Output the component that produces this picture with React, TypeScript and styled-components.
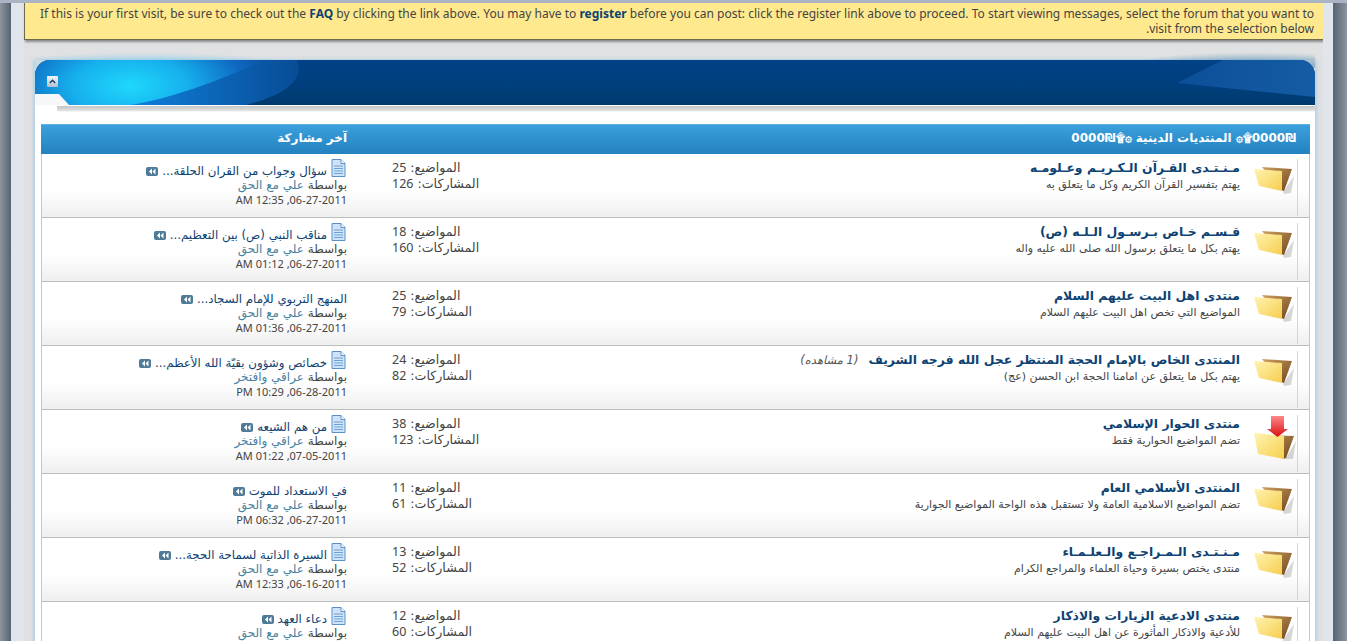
import React from "react";
import styled, { createGlobalStyle } from "styled-components";

const Global = createGlobalStyle`
  html, body { margin: 0; padding: 0; height: 100%; overflow: hidden; background: #e0e1e2; }
  body { font-family: "Noto Sans", "DejaVu Sans", sans-serif; font-size: 12px; color: #333; }
`;

const Page = styled.div`
  display: flex; height: 641px; overflow: hidden; border-top: 3px solid #aab4c4; box-sizing: border-box;
`;
const Gutter = styled.div<{ $side: "left" | "right" }>`
  flex: none; display: flex; flex-direction: ${(p) => (p.$side === "left" ? "row" : "row-reverse")};
  width: 24px;
`;
const GutterEdge = styled.div<{ $side: "left" | "right" }>`
  flex: none; width: ${(p) => (p.$side === "left" ? 11 : 14)}px;
  background: linear-gradient(${(p) => (p.$side === "left" ? "to right" : "to left")}, #8d959e, #556372);
`;
const GutterFill = styled.div<{ $side: "left" | "right" }>`
  flex: 1; background: linear-gradient(${(p) => (p.$side === "left" ? "to right" : "to left")}, #dfe6ef, #e2e5ea);
`;
const Main = styled.main`
  flex: 1; min-width: 0; background: #e0e1e2;
`;
const Notice = styled.div`
  direction: rtl; box-sizing: border-box; height: 37px; padding: 3px 9px 0 13px;
  background: #ffe98f; border: 1px solid #6f6a4c; border-width: 0 0 1px 1px; border-right: 0;
  box-shadow: 1px 2px 2px rgba(70, 70, 70, .55);
  font-size: 12px; line-height: 15px; color: #444; word-spacing: .05px;
`;
const NoticeLink = styled.a`
  color: #0d4272; font-weight: 700;
`;
const Block = styled.section`
  position: relative; margin: 20px 8px 0 11px;
  box-shadow: -2px 0 3px rgba(120, 190, 230, .4), 2px 0 3px rgba(120, 190, 230, .4);
`;
const BlockGlow = styled.div<{ $side: "left" | "right" }>`
  position: absolute; top: -8px; height: 16px; width: ${(p) => (p.$side === "left" ? 270 : 200)}px;
  ${(p) => (p.$side === "left" ? "left: 0;" : "right: 0;")}
  background: ${(p) =>
    p.$side === "left"
      ? "radial-gradient(ellipse at 40% 100%, rgba(110,200,240,.85), rgba(210,225,235,0) 70%)"
      : "radial-gradient(ellipse at 70% 100%, rgba(70,130,170,.9), rgba(210,225,235,0) 70%)"};
`;
const BlockHead = styled.header`
  position: relative; height: 45px; border-radius: 15px 15px 0 0; overflow: hidden;
  background: linear-gradient(to bottom, #014187 0, #003f7c 60%, #013a6d 100%);
`;
const HeadArt = styled.svg<{ $side: "left" | "right" }>`
  position: absolute; top: 0; ${(p) => p.$side}: 0; height: 45px; display: block;
`;
const Collapse = styled.button`
  position: absolute; left: 12px; top: 16px; width: 11px; height: 11px; padding: 0; border: 0; border-radius: 1px;
  background: linear-gradient(#f4f7fa, #b4c0cc); display: flex; align-items: center; justify-content: center;
`;
const Notch = styled.div`
  position: absolute; left: 0; bottom: 0; width: 34px; height: 11px; background: #f5f7f8;
  clip-path: polygon(0 0, 24px 0, 34px 100%, 0 100%);
`;
const Panel = styled.div`
  background: #fff; padding: 19px 5px 0 6px; position: relative;
`;
const PanelShade = styled.div`
  position: absolute; top: 1px; left: 22px; right: 0; height: 6px;
  background: linear-gradient(#c4c6c6, #dcdddd 70%, #fff);
`;
const Table = styled.div`
  direction: rtl; border-left: 1px solid #c8c8c8; border-right: 1px solid #c8c8c8;
`;
const HeadRow = styled.div`
  display: grid; grid-template-columns: 69px 1fr 150px 305px; height: 30px; align-items: center;
  margin: 0 -1px; padding-bottom: 4px;
  background: linear-gradient(#3ba0dd, #2382bf);
  color: #fff; font-weight: 700; font-size: 12px; font-family: "DejaVu Sans", sans-serif;
  border-top: 1px solid #5fb1df; box-sizing: border-box;
`;
const HeadForum = styled.div`
  grid-column: 1 / 3; padding-right: 14px; white-space: nowrap;
`;
const OrnamentNumber = styled.span`
  direction: ltr; unicode-bidi: isolate;
`;
const HeadLast = styled.div`
  grid-column: 4; margin-right: -1px;
`;
const Row = styled.div`
  display: grid; grid-template-columns: 69px 1fr 150px 305px; height: 64px; box-sizing: border-box;
  border-bottom: 1px solid #bdbdbd;
  background: linear-gradient(#fff 0, #fff 58%, #efefef 100%);
`;
const StatusCell = styled.div`
  position: relative; padding: 5px 0 0 13px; height: 52px; margin-top: 5px; direction: ltr;
  display: flex; justify-content: flex-start; align-items: flex-start;
`;
const StatusRule = styled.div`
  position: absolute; right: 11px; top: 0; bottom: 0; width: 1px; background: #d6d6d6;
`;
const ForumCell = styled.div`
  padding-top: 5px;
`;
const TitleLine = styled.div`
  display: flex; gap: 10px; align-items: center; height: 18px;
`;
const ForumTitle = styled.a`
  color: #0d4272; font: 700 12.4px/18px "DejaVu Sans", sans-serif; white-space: nowrap;
`;
const Viewers = styled.span`
  color: #555; font: italic 11.5px/18px "DejaVu Sans", sans-serif; white-space: nowrap;
`;
const ForumDesc = styled.div`
  color: #444; font: 11px/15px "DejaVu Sans", sans-serif; white-space: nowrap;
`;
const StatsCell = styled.div`
  text-align: left; padding: 6px 0 0 45px; font: 12.6px/16px "DejaVu Sans", sans-serif; color: #444; white-space: nowrap;
`;
const StatNum = styled.span`
  font-family: "Noto Sans", sans-serif; font-size: 12.5px;
`;
const LastCell = styled.div`
  padding: 5px 0 0 0; font: 12px/15px "DejaVu Sans", sans-serif; color: #444; text-align: right; white-space: nowrap;
`;
const LastTitle = styled.div`
  display: flex; align-items: flex-end; gap: 4px; height: 18px; color: #0d4272;
`;
const LastTitleText = styled.span`
  line-height: 16px; margin-bottom: -2px; font-size: 11.8px;
`;
const LastBy = styled.div`
  margin-top: 1px;
`;
const Poster = styled.a`
  color: #4a7f9f;
`;
const LastDate = styled.div`
  font-family: "Noto Sans", sans-serif; font-size: 11px; margin-top: -1px;
`;
const Badge = styled.svg`
  display: block; margin: 0 0 1px 0;
`;
const DocSvg = styled.svg`
  display: block; flex: none; margin-right: 1px;
`;

const Folder = ({ hot }: { hot: boolean }) =>
  hot ? (
    <svg width="44" height="50" viewBox="0 0 44 50" style={{ marginTop: -8 }}>
      <defs>
        <linearGradient id="fy2" x1="0" y1="0" x2="1" y2="1">
          <stop offset="0" stopColor="#fff4b4" />
          <stop offset="1" stopColor="#f6cf4c" />
        </linearGradient>
        <linearGradient id="fb2" x1="0" y1="0" x2="1" y2="1">
          <stop offset="0" stopColor="#c99a5c" />
          <stop offset="1" stopColor="#6c4317" />
        </linearGradient>
        <linearGradient id="ar" x1="0" y1="0" x2="0" y2="1">
          <stop offset="0" stopColor="#f88" />
          <stop offset="1" stopColor="#d80f0f" />
        </linearGradient>
      </defs>
      <path d="M34 44 L43 29 L40 47 L32 47 Z" fill="#bbb" opacity=".6" />
      <path d="M10 23 L41 24 L33 46 L30 47 Z" fill="url(#fb2)" />
      <path d="M1 21 L31 24 L31 47 L5 42 Z" fill="url(#fy2)" />
      <path d="M18 4 L31 4 L31 17 L35 17 L24.5 25 L14 17 L18 17 Z" fill="url(#ar)" />
    </svg>
  ) : (
    <svg width="44" height="34" viewBox="0 0 44 34">
      <defs>
        <linearGradient id="fy" x1="0" y1="0" x2="1" y2="1">
          <stop offset="0" stopColor="#fff4b4" />
          <stop offset="1" stopColor="#f6cd4c" />
        </linearGradient>
        <linearGradient id="fb" x1="0" y1="0" x2="1" y2="1">
          <stop offset="0" stopColor="#cf9f62" />
          <stop offset="1" stopColor="#6e4519" />
        </linearGradient>
      </defs>
      <path d="M30 28 L41 12 L38 29 L31 30 Z" fill="#bbb" opacity=".6" />
      <path d="M9 3 L39 5 L31 27 L28 26 Z" fill="url(#fb)" />
      <path d="M1 5 L29 7 L29 27 L6 22 Z" fill="url(#fy)" />
    </svg>
  );

const DocIcon = () => (
  <DocSvg width="15" height="18" viewBox="0 0 15 18">
    <path d="M1 .5 H10 L14 4.5 V17.5 H1 Z" fill="#cfe2f7" stroke="#5d90c9" />
    <path d="M10 .5 V4.5 H14" fill="#fff" stroke="#5d90c9" />
    <path d="M3 7 H12 M3 9.5 H12 M3 12 H12 M3 14.5 H12" stroke="#6fa3dc" strokeWidth="1.2" />
  </DocSvg>
);

const GoBadge = () => (
  <Badge width="12" height="9" viewBox="0 0 12 9">
    <rect width="12" height="9" rx="2" fill="#4f7b98" />
    <path d="M6 1.5 L3 4.5 L6 7.5 Z M9.5 1.5 L6.5 4.5 L9.5 7.5 Z" fill="#fff" />
  </Badge>
);

type Forum = {
  title: string; desc: string; viewers?: string; topics: number; posts: number;
  last: string; doc: boolean; by: string; date: string; hot?: boolean;
};

const HAQ = "علي مع الحق";
const IRAQ = "عراقي وافتخر";

const forums: Forum[] = [
  { title: "مـنـتـدى القـرآن الـكـريـم وعـلومـه", desc: "يهتم بتفسير القرآن الكريم وكل ما يتعلق به", topics: 25, posts: 126, last: "سؤال وجواب من القران الحلقة...", doc: true, by: HAQ, date: "06-27-2011, 12:35 AM" },
  { title: "قـسـم خـاص بـرسـول الـلـه (ص)", desc: "يهتم بكل ما يتعلق برسول الله صلى الله عليه واله", topics: 18, posts: 160, last: "مناقب النبي (ص) بين التعظيم...", doc: true, by: HAQ, date: "06-27-2011, 01:12 AM" },
  { title: "منتدى اهل البيت عليهم السلام", desc: "المواضيع التي تخص اهل البيت عليهم السلام", topics: 25, posts: 79, last: "المنهج التربوي للإمام السجاد...", doc: false, by: HAQ, date: "06-27-2011, 01:36 AM" },
  { title: "المنتدى الخاص بالإمام الحجة المنتظر عجل الله فرجه الشريف", viewers: "(1 مشاهده)", desc: "يهتم بكل ما يتعلق عن امامنا الحجة ابن الحسن (عج)", topics: 24, posts: 82, last: "خصائص وشؤون بقيّة الله الأعظم...", doc: true, by: IRAQ, date: "06-28-2011, 10:29 PM" },
  { title: "منتدى الحوار الإسلامي", desc: "تضم المواضيع الحوارية فقط", topics: 38, posts: 123, last: "من هم الشيعه", doc: true, by: IRAQ, date: "07-05-2011, 01:22 AM", hot: true },
  { title: "المنتدى الأسلامي العام", desc: "تضم المواضيع الاسلامية العامة ولا تستقبل هذه الواحة المواضيع الجوارية", topics: 11, posts: 61, last: "في الاستعداد للموت", doc: false, by: HAQ, date: "06-27-2011, 06:32 PM" },
  { title: "مـنـتـدى الـمـراجـع والـعلـمـاء", desc: "منتدى يختص بسيرة وحياة العلماء والمراجع الكرام", topics: 13, posts: 52, last: "السيرة الذاتية لسماحة الحجة...", doc: true, by: HAQ, date: "06-16-2011, 12:33 AM" },
  { title: "منتدى الادعية الزيارات والاذكار", desc: "للأدعية والاذكار المأثورة عن اهل البيت عليهم السلام", topics: 12, posts: 60, last: "دعاء العهد", doc: true, by: HAQ, date: "06-16-2011, 12:33 AM" },
];

export default function App() {
  return (
    <>
      <Global />
      <Page>
        <Gutter $side="left"><GutterEdge $side="left" /><GutterFill $side="left" /></Gutter>
        <Main>
          <Notice>
            If this is your first visit, be sure to check out the <NoticeLink>FAQ</NoticeLink> by clicking the link above. You may have to <NoticeLink>register</NoticeLink> before you can post: click the register link above to proceed. To start viewing messages, select the forum that you want to visit from the selection below.
          </Notice>
          <Block>
            <BlockGlow $side="left" />
            <BlockGlow $side="right" />
            <BlockHead>
              <HeadArt $side="left" width="280" viewBox="0 0 280 45">
                <defs>
                  <radialGradient id="cy" cx="95" cy="26" r="165" gradientUnits="userSpaceOnUse" gradientTransform="translate(0 13) scale(1 .5)">
                    <stop offset="0" stopColor="#1fd8fb" />
                    <stop offset=".35" stopColor="#16b0ee" />
                    <stop offset=".7" stopColor="#0f66bf" />
                    <stop offset="1" stopColor="#07488f" />
                  </radialGradient>
                  <linearGradient id="wedge" x1="95" y1="0" x2="262" y2="0" gradientUnits="userSpaceOnUse">
                    <stop offset="0" stopColor="#0f80dc" />
                    <stop offset="1" stopColor="#084c96" />
                  </linearGradient>
                </defs>
                <path d="M0 0 H260 C 268 20 250 35 210 45 H0 Z" fill="url(#cy)" />
                <path d="M95 45 C 140 38 190 18 230 0 H262 C 270 20 250 35 210 45 Z" fill="url(#wedge)" />
              </HeadArt>
              <HeadArt $side="right" width="170" viewBox="0 0 170 45">
                <defs>
                  <linearGradient id="rg" x1="0" y1="0" x2="1" y2="0">
                    <stop offset="0" stopColor="#0c4f98" />
                    <stop offset="1" stopColor="#155ca5" />
                  </linearGradient>
                </defs>
                <path d="M32 23 L78 0 H170 V37 Z" fill="url(#rg)" />
              </HeadArt>
              <Collapse aria-label="collapse">
                <svg width="7" height="5" viewBox="0 0 7 5"><path d="M.8 4 L3.5 1.2 L6.2 4" fill="none" stroke="#123f66" strokeWidth="1.4" /></svg>
              </Collapse>
              <Notch />
            </BlockHead>
            <Panel>
              <PanelShade />
              <Table>
                <HeadRow>
                  <HeadForum>
                    <OrnamentNumber>0000₪</OrnamentNumber>{"۩۞ المنتديات الدينية ۞۩"}<OrnamentNumber>0000₪</OrnamentNumber>
                  </HeadForum>
                  <HeadLast>آخر مشاركة</HeadLast>
                </HeadRow>
                {forums.map((f) => (
                  <Row key={f.title}>
                    <StatusCell>
                      <StatusRule />
                      <Folder hot={!!f.hot} />
                    </StatusCell>
                    <ForumCell>
                      <TitleLine>
                        <ForumTitle>{f.title}</ForumTitle>
                        {f.viewers && <Viewers>{f.viewers}</Viewers>}
                      </TitleLine>
                      <ForumDesc>{f.desc}</ForumDesc>
                    </ForumCell>
                    <StatsCell>
                      <div>المواضيع: <StatNum>{f.topics}</StatNum></div>
                      <div>المشاركات: <StatNum>{f.posts}</StatNum></div>
                    </StatsCell>
                    <LastCell>
                      <LastTitle>
                        {f.doc && <DocIcon />}
                        <LastTitleText>{f.last}</LastTitleText>
                        <GoBadge />
                      </LastTitle>
                      <LastBy>بواسطة <Poster>{f.by}</Poster></LastBy>
                      <LastDate>{f.date}</LastDate>
                    </LastCell>
                  </Row>
                ))}
              </Table>
            </Panel>
          </Block>
        </Main>
        <Gutter $side="right"><GutterEdge $side="right" /><GutterFill $side="right" /></Gutter>
      </Page>
    </>
  );
}
